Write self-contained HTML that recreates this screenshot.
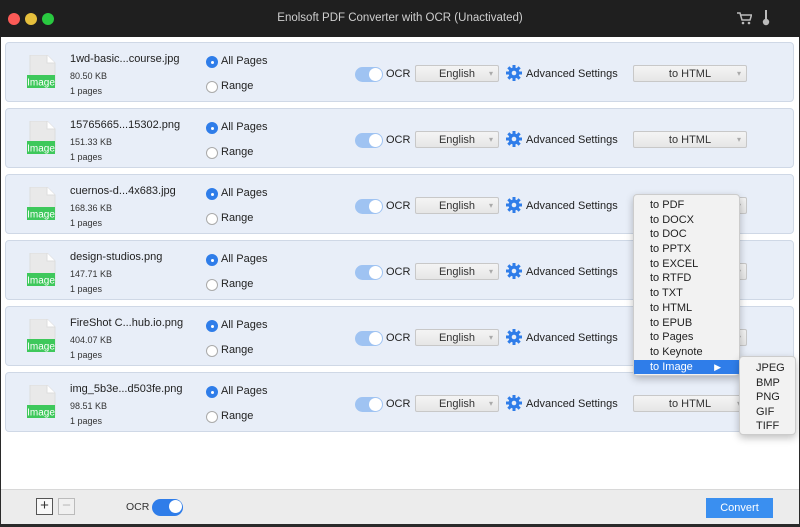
<!DOCTYPE html>
<html><head><meta charset="utf-8"><style>
*{box-sizing:border-box;margin:0;padding:0}
body{width:800px;height:527px;overflow:hidden;background:#2a2a2a;font-family:"Liberation Sans",Helvetica,Arial,sans-serif;position:relative}
.title{position:absolute;left:0;top:0;width:800px;height:37px;background:#1f1f1f;color:#cfcfcf;font-size:11.5px;text-align:center;line-height:36px}
.dot{position:absolute;top:13px;width:12px;height:12px;border-radius:50%}
.win{position:absolute;left:1px;top:37px;width:798px;height:487px;background:#fff}
.row{position:absolute;left:5px;width:789px;height:60px;background:#e8eef8;border:1px solid #cfd8e6;border-radius:4px}
.abs{position:absolute}
.fn{font-size:11px;color:#222}
.sm{font-size:9px;color:#333}
.radio{position:absolute;width:12px;height:12px;border-radius:50%;border:1px solid #aaa;background:#fff}
.radio.on{background:#2f7de9;border-color:#2f7de9}
.radio.on:after{content:"";position:absolute;left:3.5px;top:3.5px;width:3px;height:3px;border-radius:50%;background:#fff}
.lbl{font-size:11px;color:#222}
.tog{position:absolute;width:28px;height:15px;border-radius:8px;background:#9fc3f2}
.tog:after{content:"";position:absolute;right:1px;top:1px;width:13px;height:13px;border-radius:50%;background:#fff}
.dd{position:absolute;height:17px;border:1px solid #c8c8c8;border-radius:2px;background:linear-gradient(#f4f4f4,#e6e6e6);font-size:11px;color:#333;text-align:center;line-height:16px}
.dd:after{content:"▾";position:absolute;right:5px;top:0;font-size:8px;color:#aaa}
.menu{position:absolute;left:633px;top:194px;width:107px;height:182px;background:#f2f2f2;border:1px solid #ccc;border-radius:4px;box-shadow:0 3px 8px rgba(0,0,0,.25);font-size:11px;color:#222}
.menu div{height:14.7px;line-height:14.7px;padding-left:16px}
.menu .hl{background:#2f7de9;color:#fff;position:relative}
.sub{position:absolute;left:739px;top:356px;width:57px;height:79px;background:#f2f2f2;border:1px solid #ccc;border-radius:4px;box-shadow:0 3px 8px rgba(0,0,0,.25);font-size:11px;color:#222;padding-top:4px}
.sub div{height:14.6px;line-height:14.6px;padding-left:16px}
</style></head><body>
<div class="title">Enolsoft PDF Converter with OCR (Unactivated)
<div class="dot" style="left:8px;background:#fc5b57"></div>
<div class="dot" style="left:25px;background:#e5bf3c"></div>
<div class="dot" style="left:42px;background:#29c940"></div>
<svg class="abs" style="left:737px;top:12px" width="15" height="13" viewBox="0 0 15 13"><path d="M0 1h3l2 7h8l1.5-5H4" fill="none" stroke="#bbb" stroke-width="1.5"/><circle cx="6" cy="11" r="1.3" fill="#bbb"/><circle cx="12" cy="11" r="1.3" fill="#bbb"/></svg>
<svg class="abs" style="left:762px;top:10px" width="8" height="16" viewBox="0 0 8 16"><rect x="3" y="0" width="2" height="9" fill="#bbb"/><circle cx="4" cy="12" r="3.2" fill="#bbb"/></svg>
</div>
<div class="win">
<div class="abs" style="left:0;top:452px;width:798px;height:35px;background:#ececec;border-top:1px solid #d8d8d8"></div>
</div>
<div id="rows"></div>
<div class="abs" style="left:36px;top:498px;width:17px;height:17px;border:1px solid #555;background:#f8f8f8;font-size:15px;line-height:14px;text-align:center;color:#333">+</div>
<div class="abs" style="left:58px;top:498px;width:17px;height:17px;border:1px solid #bbb;background:#f0f0f0;font-size:15px;line-height:14px;text-align:center;color:#bbb">−</div>
<div class="abs" style="left:126px;top:501px;color:#333;font-size:10.5px">OCR</div>
<div class="tog" style="left:152px;top:499px;width:31px;height:17px;border-radius:9px;background:#2f7de9"></div>
<div class="abs" style="left:706px;top:498px;width:67px;height:20px;background:#3a8ff0;color:#fff;font-size:11px;text-align:center;line-height:20px">Convert</div>
<div class="menu">
<div style="margin-top:3px">to PDF</div><div>to DOCX</div><div>to DOC</div><div>to PPTX</div><div>to EXCEL</div><div>to RTFD</div><div>to TXT</div><div>to HTML</div><div>to EPUB</div><div>to Pages</div><div>to Keynote</div><div class="hl">to Image<span style="position:absolute;right:18px;font-size:9px">▶</span></div>
</div>
<div class="sub"><div>JPEG</div><div>BMP</div><div>PNG</div><div>GIF</div><div>TIFF</div></div>
<script>
var d=[["1wd-basic...course.jpg","80.50 KB"],["15765665...15302.png","151.33 KB"],["cuernos-d...4x683.jpg","168.36 KB"],["design-studios.png","147.71 KB"],["FireShot C...hub.io.png","404.07 KB"],["img_5b3e...d503fe.png","98.51 KB"]];
var h="";
d.forEach(function(r,i){var t=42+66*i;
h+='<div class="row" style="top:'+t+'px">'+
'<svg class="abs" style="left:21px;top:12px" width="30" height="38" viewBox="0 0 30 38"><path d="M3 0h17l8 8v22H3z" fill="#e9e9e9" stroke="#ddd"/><path d="M20 0v8h8" fill="#fff" stroke="#ddd"/><rect x="0" y="20" width="28" height="13" fill="#3ec85b"/><text x="14" y="30.5" font-size="10" fill="#fff" text-anchor="middle" font-family="Liberation Sans">Image</text></svg>'+
'<div class="abs fn" style="left:64px;top:10px">'+r[0]+'</div>'+
'<div class="abs sm" style="left:64px;top:28px">'+r[1]+'</div>'+
'<div class="abs sm" style="left:64px;top:43px">1 pages</div>'+
'<div class="radio on" style="left:200px;top:13px"></div><div class="abs lbl" style="left:215px;top:12px">All Pages</div>'+
'<div class="radio" style="left:200px;top:38px"></div><div class="abs lbl" style="left:215px;top:37px">Range</div>'+
'<div class="tog" style="left:349px;top:24px"></div><div class="abs lbl" style="left:380px;top:25px">OCR</div>'+
'<div class="dd" style="left:409px;top:22px;width:84px">English</div>'+
'<svg class="abs" style="left:500px;top:22px" width="16" height="16" viewBox="0 0 16 16"><g fill="#2f7de9"><circle cx="8" cy="8" r="5.5"/><rect x="6.5" y="0" width="3" height="16"/><rect x="0" y="6.5" width="16" height="3"/><rect x="6.5" y="0" width="3" height="16" transform="rotate(45 8 8)"/><rect x="6.5" y="0" width="3" height="16" transform="rotate(-45 8 8)"/></g><circle cx="8" cy="8" r="2.3" fill="#e8eef8"/></svg>'+
'<div class="abs lbl" style="left:520px;top:25px">Advanced Settings</div>'+
'<div class="dd" style="left:627px;top:22px;width:114px">to HTML</div></div>';});
document.getElementById("rows").innerHTML=h;
</script>
</body></html>
